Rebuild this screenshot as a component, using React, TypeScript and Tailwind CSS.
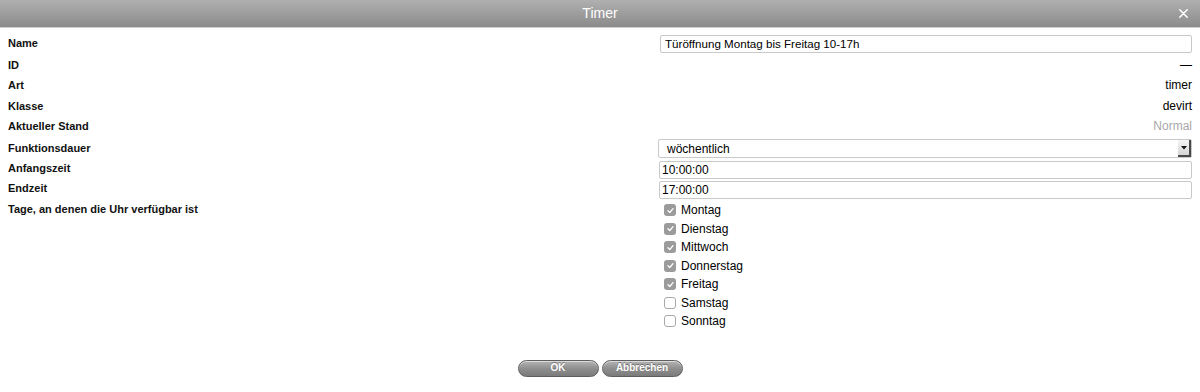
import React from "react";

const days: { name: string; checked: boolean }[] = [
  { name: "Montag", checked: true },
  { name: "Dienstag", checked: true },
  { name: "Mittwoch", checked: true },
  { name: "Donnerstag", checked: true },
  { name: "Freitag", checked: true },
  { name: "Samstag", checked: false },
  { name: "Sonntag", checked: false },
];

function Label({ children }: { children: React.ReactNode }) {
  return <div className="text-[11px] leading-[15px] pt-px font-bold text-[#111]">{children}</div>;
}

function CheckBox({ checked }: { checked: boolean }) {
  if (checked) {
    return (
      <div className="w-[12px] h-[12px] rounded-[3px] bg-[#9b9b9b] flex items-center justify-center">
        <svg width="9" height="9" viewBox="0 0 9 9">
          <path d="M2 4.8 L3.8 6.5 L7 2.6" fill="none" stroke="#fff" strokeWidth="1.3" strokeLinecap="round" strokeLinejoin="round" />
        </svg>
      </div>
    );
  }
  return <div className="w-[12px] h-[12px] rounded-[3px] bg-white border border-[#a9a9a9]" />;
}

function PillButton({ children }: { children: React.ReactNode }) {
  return (
    <button className="w-[81px] h-[17px] rounded-full border border-[#5e5e5e] bg-gradient-to-b from-[#b4b4b4] via-[#8f8f8f] to-[#7b7b7b] shadow-[inset_0_1px_0_rgba(255,255,255,0.55)] text-white text-[10px] font-bold leading-none flex items-center justify-center [text-shadow:0_-1px_0_rgba(0,0,0,0.35)]">
      {children}
    </button>
  );
}

export default function App() {
  return (
    <div className="w-[1200px] h-[392px] bg-white font-['Liberation_Sans',Arial,sans-serif] text-black overflow-hidden">
      <div className="h-[28px] bg-gradient-to-b from-[#b0b0b0] to-[#8b8b8b] border-b border-[#cfcfcf] flex items-center justify-center relative">
        <span className="text-white text-[14px] leading-none pb-[2px]">Timer</span>
        <svg className="absolute right-[12px] top-[9px]" width="9" height="9" viewBox="0 0 9 9">
          <path d="M0.8 0.8 L8.2 8.2 M8.2 0.8 L0.8 8.2" stroke="#fff" strokeWidth="1.5" strokeLinecap="round" />
        </svg>
      </div>
      <div className="px-2 pt-[7px] grid grid-cols-[650px_534px]">
        {/* Name */}
        <div className="h-[22px]"><Label>Name</Label></div>
        <div className="h-[22px]">
          <div className="h-[18px] border border-[#c9c9c9] rounded-[2px] text-[11.6px] leading-[16px] pl-[4px] ml-[2px]">
            Türöffnung Montag bis Freitag 10-17h
          </div>
        </div>
        {/* ID */}
        <div className="h-[20px]"><Label>ID</Label></div>
        <div className="h-[20px] text-right text-[12px] leading-[15px] pt-px">—</div>
        {/* Art */}
        <div className="h-[21px]"><Label>Art</Label></div>
        <div className="h-[21px] text-right text-[12px] leading-[15px] pt-px">timer</div>
        {/* Klasse */}
        <div className="h-[20px]"><Label>Klasse</Label></div>
        <div className="h-[20px] text-right text-[12px] leading-[15px] pt-px">devirt</div>
        {/* Aktueller Stand */}
        <div className="h-[22px]"><Label>Aktueller Stand</Label></div>
        <div className="h-[22px] text-right text-[12px] leading-[15px] pt-px text-[#a8a8a8]">Normal</div>
        {/* Funktionsdauer */}
        <div className="h-[20px]"><Label>Funktionsdauer</Label></div>
        <div className="h-[20px]">
          <div className="-mt-px h-[19px] border border-[#c9c9c9] rounded-[2px] flex items-center justify-between">
            <span className="text-[12px] leading-none pl-[8px]">wöchentlich</span>
            <div className="w-[13px] h-[17px] bg-gradient-to-b from-[#f4f4f4] to-[#d6d6d6] border-r-2 border-b-2 border-[#4a4a4a] flex items-center justify-center">
              <svg width="6" height="4" viewBox="0 0 6 4"><path d="M0 0 H6 L3 3.5 Z" fill="#111" /></svg>
            </div>
          </div>
        </div>
        {/* Anfangszeit */}
        <div className="h-[20px]"><Label>Anfangszeit</Label></div>
        <div className="h-[20px]">
          <div className="mt-px h-[18px] border border-[#c9c9c9] rounded-[2px] text-[12px] leading-[16px] pl-[2px] ml-px">10:00:00</div>
        </div>
        {/* Endzeit */}
        <div className="h-[21px]"><Label>Endzeit</Label></div>
        <div className="h-[21px]">
          <div className="mt-px h-[18px] border border-[#c9c9c9] rounded-[2px] text-[12px] leading-[16px] pl-[2px] ml-px">17:00:00</div>
        </div>
        {/* Tage */}
        <div><Label>Tage, an denen die Uhr verfügbar ist</Label></div>
        <div className="flex flex-col">
          {days.map((d) => (
            <div key={d.name} className="h-[18.5px] flex items-center pl-[6px] gap-[5px]">
              <CheckBox checked={d.checked} />
              <span className="text-[12px] leading-none">{d.name}</span>
            </div>
          ))}
        </div>
      </div>
      <div className="mt-[29px] flex justify-center gap-[3px]">
        <PillButton>OK</PillButton>
        <PillButton>Abbrechen</PillButton>
      </div>
    </div>
  );
}
